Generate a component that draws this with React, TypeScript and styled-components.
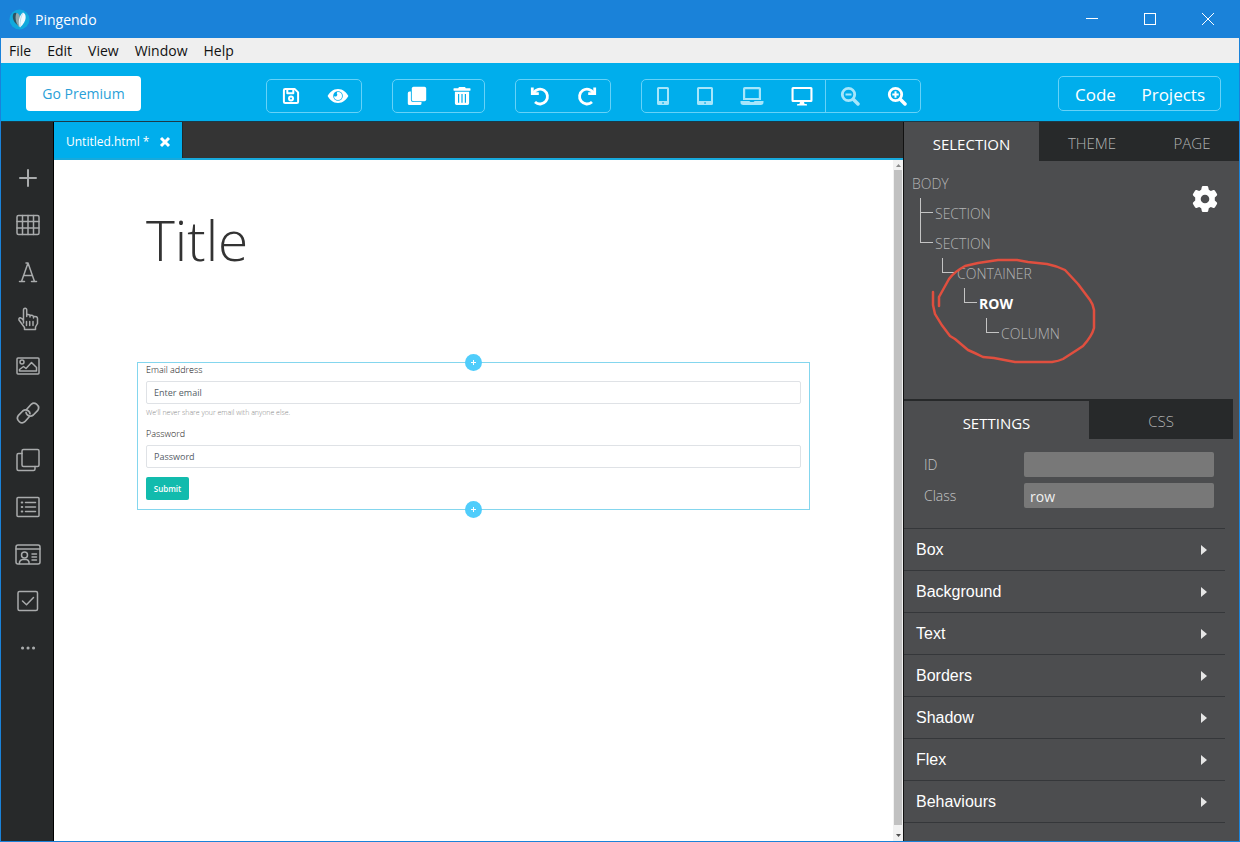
import React from "react";
import styled, { createGlobalStyle, css } from "styled-components";

const ui = `"Open Sans", "Noto Sans", sans-serif`;

const color = {
  frame: "#1a82d9",
  bar: "#00aeec",
  outline: "#66d2f8",
  dark: "#27292a",
  tabs: "#343434",
  panel: "#4c4d4f",
  muted: "#b3b4b5",
  guide: "#84d6ee",
};

const GlobalStyle = createGlobalStyle`
  *, *::before, *::after { box-sizing: border-box; }
  body { margin: 0; font-family: ${ui}; background: ${color.panel}; }
  button, input { font: inherit; }
  button { margin: 0; padding: 0; border: 0; background: none; color: inherit; cursor: pointer; }
  h1, ul { margin: 0; padding: 0; }
  ul { list-style: none; }
  svg { display: block; }
`;

const AppWindow = styled.div`
  display: flex;
  flex-direction: column;
  min-height: 100vh;
  border: 1px solid ${color.frame};
  border-top: 0;
`;

/* Title bar and menu */

const TitleBar = styled.header`
  display: flex;
  align-items: center;
  height: 38px;
  padding: 0 2px 0 8px;
  background: ${color.frame};
  color: #fff;
`;

const AppName = styled.span`
  margin-left: 5px;
  padding-top: 1px;
  font-size: 14px;
  line-height: 20px;
`;

const WindowButtons = styled.div`
  display: flex;
  margin-left: auto;
`;

const WindowButton = styled.button`
  display: grid;
  place-items: center;
  width: 58px;
  height: 38px;
`;

const MenuBar = styled.nav`
  display: flex;
  align-items: center;
  gap: 16px;
  height: 25px;
  padding-left: 8px;
  background: #efefef;
`;

const MenuItem = styled.button`
  color: #111;
  font-size: 14px;
  line-height: 20px;
`;

/* Toolbar */

const Toolbar = styled.div`
  display: flex;
  align-items: center;
  height: 58px;
  padding: 4px 18px 0 25px;
  background: ${color.bar};
  color: #fff;
`;

const PremiumButton = styled.button`
  width: 115px;
  height: 35px;
  margin-bottom: 2px;
  border-radius: 4px;
  background: #fff;
  color: #2a9fd8;
  font-size: 14px;
`;

const ToolGroups = styled.div`
  display: flex;
  gap: 30px;
  margin: 4px auto 0 125px;
`;

const ToolGroup = styled.div`
  display: flex;
  height: 34px;
  border: 1px solid ${color.outline};
  border-radius: 5px;
`;

const ToolButton = styled.button<{ $width?: number; $dim?: boolean; $divided?: boolean }>`
  display: grid;
  place-items: center;
  width: ${(p) => p.$width ?? 47}px;
  color: ${(p) => (p.$dim ? "#a6e6fb" : "#fff")};
  ${(p) => p.$divided && css`border-left: 1px solid ${color.outline};`}
`;

const ModeGroup = styled.div`
  display: flex;
  justify-content: space-between;
  width: 163px;
  height: 35px;
  margin-bottom: 2px;
  padding: 2px 15px 0 16px;
  border: 1px solid ${color.outline};
  border-radius: 5px;
  font-size: 17px;
`;

/* Body */

const Body = styled.div`
  display: flex;
  flex: 1;
  border-top: 1px solid #1c3a48;
`;

const Rail = styled.nav`
  display: flex;
  flex-direction: column;
  width: 53px;
  flex: none;
  padding: 32px 0 0 2px;
  border-right: 1px solid #000;
  background: ${color.dark};
  color: #a9abac;
`;

const RailButton = styled.button`
  display: grid;
  place-items: center;
  height: 47px;
`;

const Workspace = styled.main`
  display: flex;
  flex: 1;
  flex-direction: column;
  min-width: 0;
`;

const FileTabs = styled.div`
  display: flex;
  height: 38px;
  border-bottom: 2px solid #17a9dc;
  background: ${color.tabs};
`;

const FileTab = styled.div`
  display: flex;
  align-items: center;
  gap: 10px;
  width: 129px;
  padding: 3px 0 0 12px;
  border-right: 1px solid #20282c;
  background: ${color.bar};
  color: #fff;
  font-size: 12px;
`;

const CanvasArea = styled.div`
  display: flex;
  flex: 1;
  background: #fff;
`;

const Canvas = styled.div`
  flex: 1;
  min-width: 0;
  padding: 45px 83px 0;
`;

const ScrollTrack = styled.div`
  display: flex;
  flex-direction: column;
  align-items: center;
  justify-content: space-between;
  width: 10px;
  padding: 4px 0;
  background: #f1f1f1;
`;

const ScrollThumb = styled.div`
  flex: 1;
  width: 8px;
  margin: 3px 0 9px;
  background: #c1c1c1;
`;

const PageTitle = styled.h1`
  padding-left: 9px;
  color: #333;
  font-size: 55px;
  font-weight: 300;
  line-height: 70px;
`;

const SelectedRow = styled.form`
  position: relative;
  display: flex;
  flex-direction: column;
  align-items: flex-start;
  height: 148px;
  margin-top: 87px;
  padding: 0 8px;
  border: 1px solid ${color.guide};
  color: #111;
  font-size: 9px;
`;

const AddHandle = styled.button<{ $edge: "top" | "bottom" }>`
  position: absolute;
  left: 50%;
  ${(p) => p.$edge}: -9px;
  display: grid;
  place-items: center;
  width: 17px;
  height: 17px;
  margin-left: -9px;
  border-radius: 50%;
  background: #50cdfb;
  color: #fff;
`;

const FieldLabel = styled.label`
  font-weight: 300;
  line-height: 14px;
`;

const TextField = styled.input`
  width: 100%;
  height: 23px;
  margin-top: 4px;
  padding: 0 7px;
  border: 1px solid #dfe2e6;
  border-radius: 2px;
  outline: 0;
  background: #fff;
  &::placeholder {
    color: #555d66;
    opacity: 1;
  }
`;

const Hint = styled.small`
  margin: 2px 0 7px;
  color: #8a8a8a;
  font-size: 7px;
  font-weight: 300;
  line-height: 14px;
`;

const SubmitButton = styled.button`
  width: 43px;
  height: 23px;
  margin-top: 9px;
  border-radius: 2px;
  background: #12bbad;
  color: #fff;
  font-size: 8px;
  font-weight: 600;
`;

/* Inspector */

const Inspector = styled.aside`
  width: 336px;
  flex: none;
  border-left: 1px solid #111;
  background: ${color.panel};
  color: #fff;
`;

const PanelTabs = styled.div`
  display: flex;
  height: 39px;
  background: ${color.dark};
  font-size: 15px;
`;

const SubTabs = styled(PanelTabs)`
  height: 40px;
  margin-right: 6px;
  border-top: 2px solid ${color.dark};
`;

const PanelTab = styled.button<{ $grow: number; $active?: boolean }>`
  flex: ${(p) => p.$grow} 1 0;
  padding-top: ${(p) => (p.$active ? 5 : 2)}px;
  background: ${(p) => (p.$active ? color.panel : "transparent")};
  color: ${(p) => (p.$active ? "#fff" : color.muted)};
  font-weight: ${(p) => (p.$active ? 400 : 300)};
`;

const TreePanel = styled.section`
  position: relative;
  height: 238px;
  padding: 7px 8px;
`;

const TreeRow = styled.li<{ $depth: number }>`
  display: flex;
  height: 30px;
  padding-left: ${(p) => Math.max(0, p.$depth * 22 - 14)}px;
`;

const Branch = styled.span<{ $open?: boolean }>`
  width: 15px;
  height: ${(p) => (p.$open ? 30 : 15)}px;
  border-left: 1px solid #c4c4c4;
  &::after {
    content: "";
    display: block;
    width: 12px;
    height: 15px;
    border-bottom: 1px solid #c4c4c4;
  }
`;

const TreeNode = styled.button<{ $selected?: boolean }>`
  color: ${(p) => (p.$selected ? "#fff" : color.muted)};
  font-size: 14px;
  font-weight: ${(p) => (p.$selected ? 700 : 300)};
  line-height: 32px;
`;

const GearButton = styled.button`
  position: absolute;
  top: 24px;
  right: 20px;
`;

const Scribble = styled.svg`
  position: absolute;
  top: 94px;
  left: 24px;
  pointer-events: none;
`;

const Fields = styled.div`
  display: flex;
  flex-direction: column;
  gap: 6px;
  padding: 13px 25px 20px 20px;
`;

const FieldRow = styled.div`
  display: flex;
  align-items: center;
`;

const PropertyLabel = styled.label`
  width: 100px;
  color: #c4c5c6;
  font-size: 14px;
  font-weight: 300;
  line-height: 25px;
`;

const PropertyInput = styled.input`
  flex: 1;
  min-width: 0;
  height: 25px;
  padding: 2px 6px 0;
  border: 0;
  border-radius: 2px;
  outline: 0;
  background: #787878;
  color: #f0f0f0;
  font-size: 14px;
`;

const Accordion = styled.div`
  margin-right: 14px;
  border-bottom: 1px solid #35373a;
`;

const AccordionButton = styled.button`
  display: flex;
  align-items: center;
  justify-content: space-between;
  width: 100%;
  height: 42px;
  padding: 0 18px 0 12px;
  border-top: 1px solid #35373a;
  font-family: "Liberation Sans", Arial, sans-serif;
  font-size: 16px;
`;

/* Icons */

const Logo = () => (
  <svg width="21" height="21" viewBox="0 0 21 21" aria-hidden="true">
    <circle cx="10.5" cy="10.5" r="10" fill="#10a9dd" />
    <path d="M10 17C4.500 14 2.500 8 4.500 4.500 6.500 3 8.500 4 9.500 7z" fill="#2b5361" />
    <path d="M10 18C6 13 6 7 7.500 4 9.500 4 10.800 6 11.200 9z" fill="#8fa7ad" />
    <path d="M11 18.500C8.500 14 10 6.500 14 3.500 17.500 4.500 18.500 12 11 18.500z" fill="#eefaff" />
    <path d="M11 18C10.800 12 12 7 14 4" fill="none" stroke="#b4dcea" strokeWidth="1" />
  </svg>
);

const Fill = ({ size, box = 20, children }: { size: number; box?: number; children: React.ReactNode }) => (
  <svg width={size} height={size} viewBox={`0 0 ${box} ${box}`} fill="currentColor" fillRule="evenodd" aria-hidden="true">
    {children}
  </svg>
);

const Line = ({ size = 26, width = 1.5, children }: { size?: number; width?: number; children: React.ReactNode }) => (
  <svg
    width={size}
    height={size}
    viewBox={`0 0 ${size} ${size}`}
    fill="none"
    stroke="currentColor"
    strokeWidth={width}
    strokeLinecap="round"
    strokeLinejoin="round"
    aria-hidden="true"
  >
    {children}
  </svg>
);

const icons = {
  save: (
    <Line size={18} width={2}>
      <path d="M1.900 3.200Q1.900 1.900 3.200 1.900H12.600L16.100 5.400V14.800Q16.100 16.100 14.800 16.100H3.200Q1.900 16.100 1.900 14.800z" />
      <path d="M5.300 2.200V6.300H11.300V2.200" />
      <circle cx="9" cy="11.400" r="2" />
    </Line>
  ),
  eye: (
    <Fill size={22} box={22}>
      <path d="M11 4C6 4 2.500 7.500.6 11 2.500 14.500 6 18 11 18s8.500-3.500 10.400-7C19.500 7.500 16 4 11 4zm0 2.200a4.800 4.800 0 1 1 0 9.600 4.800 4.800 0 0 1 0-9.600z" />
      <path d="M11 7a4 4 0 1 1-4 4c.6.800 2 .8 2.700.1.700-.7.800-2 .1-2.700C9.700 7.700 10.200 7 11 7z" />
    </Fill>
  ),
  copy: (
    <Fill size={20}>
      <path d="M6.500.8h11Q19.200.8 19.200 2.500v11q0 1.700-1.700 1.700h-11q-1.700 0-1.700-1.700v-11Q4.800.8 6.500.8z" />
      <path d="M3.900 5.500v8.300q0 2.300 2.300 2.300h8.300v1.300q0 1.700-1.700 1.700H2.500Q.8 19.100.8 17.400V7.200Q.8 5.500 2.500 5.500z" />
    </Fill>
  ),
  trash: (
    <Fill size={20}>
      <path d="M7 1h6l.8 1.300H18q.5 0 .5.600v1.200q0 .6-.5.600H2q-.5 0-.5-.6V2.900q0-.6.500-.6h4.200z" />
      <path d="M2.900 5.700h14.200v11.600q0 1.700-1.700 1.700H4.600q-1.700 0-1.700-1.700zM6 8v8.800h1.200V8zm3.400 0v8.800h1.200V8zm3.400 0v8.800H14V8z" />
    </Fill>
  ),
  undo: (
    <Line size={20} width={2.800}>
      <path d="M3.600 7A7.400 7.400 0 1 1 5 16" strokeLinecap="butt" />
      <path d="M2.300 1.500V7.600H8.800" strokeLinejoin="miter" strokeLinecap="butt" />
      <path d="M2 4L6.500 8H2z" fill="currentColor" stroke="none" />
    </Line>
  ),
  redo: (
    <Line size={20} width={2.800}>
      <path d="M16.400 7A7.400 7.400 0 1 0 15 16" strokeLinecap="butt" />
      <path d="M17.700 1.500V7.600H11.200" strokeLinejoin="miter" strokeLinecap="butt" />
      <path d="M18 4L13.500 8H18z" fill="currentColor" stroke="none" />
    </Line>
  ),
  phone: (
    <Fill size={20}>
      <path d="M5.500 1h9Q16 1 16 2.500v15q0 1.500-1.500 1.500h-9Q4 19 4 17.500v-15Q4 1 5.500 1zm.5 2v12h8V3zm3.300 13.200v1.500h1.500v-1.500z" />
    </Fill>
  ),
  tablet: (
    <Fill size={20}>
      <path d="M3.500 1h13Q18 1 18 2.500v15q0 1.500-1.500 1.500h-13Q2 19 2 17.500v-15Q2 1 3.500 1zM4 3v12h12V3zm5.300 13.200v1.500h1.500v-1.500z" />
    </Fill>
  ),
  laptop: (
    <Fill size={24} box={24}>
      <path d="M4.800 3h14.400Q21 3 21 4.800V16H3V4.800Q3 3 4.800 3zM5.200 5.200v8.800h13.600V5.200z" />
      <path d="M.5 17h9q.3 1 1.300 1h2.400q1 0 1.300-1h9v1.300q0 2.700-2.700 2.700H3.200Q.5 21 .5 18.300z" />
    </Fill>
  ),
  desktop: (
    <Fill size={22} box={22}>
      <path d="M2 2h18q1.500 0 1.500 1.500v12Q21.500 17 20 17H2Q.5 17 .5 15.500v-12Q.5 2 2 2zm.6 2v11h16.800V4z" />
      <path d="M9 17h4l.6 2h1.600q.8 0 .8.800v.7H6v-.7q0-.8.800-.8h1.600z" />
    </Fill>
  ),
  zoomOut: (
    <Line size={20} width={2.800}>
      <circle cx="8.500" cy="8.500" r="6.200" />
      <path d="M13.500 13.500L18 18" strokeWidth="3.500" />
      <path d="M5.500 8.500H11.500" strokeWidth="2" strokeLinecap="butt" />
    </Line>
  ),
  zoomIn: (
    <Line size={20} width={2.800}>
      <circle cx="8.500" cy="8.500" r="6.200" />
      <path d="M13.500 13.500L18 18" strokeWidth="3.500" />
      <path d="M5.300 8.500H11.700M8.500 5.300V11.700" strokeWidth="2" strokeLinecap="butt" />
    </Line>
  ),
  close: (
    <Line size={12} width={3}>
      <path d="M2 2L10 10M10 2L2 10" strokeLinecap="butt" />
    </Line>
  ),
  gear: (
    <Fill size={28} box={28}>
      <path d="M12 1h4Q17 1 17.200 2L17.800 4.700 19.800 5.900 22.400 5.100Q23.400 4.700 24 5.700L26 9.100Q26.500 10 25.700 10.700L23.800 12.500V15.500L25.700 17.300Q26.500 18 26 18.900L24 22.300Q23.400 23.300 22.400 22.900L19.800 22.100 17.800 23.300 17.200 26Q17 27 16 27H12Q11 27 10.800 26L10.200 23.300 8.200 22.100 5.600 22.900Q4.600 23.300 4 22.300L2 18.900Q1.500 18 2.300 17.300L4.200 15.500V12.500L2.300 10.700Q1.500 10 2 9.100L4 5.700Q4.600 4.700 5.600 5.100L8.200 5.900 10.200 4.700 10.800 2Q11 1 12 1zM14 9.700a4.300 4.300 0 1 0 0 8.600 4.300 4.300 0 0 0 0-8.600z" />
    </Fill>
  ),
};

const railIcons: [string, React.ReactNode][] = [
  ["Add", <Line width={2}><path d="M13 5V21M5 13H21" /></Line>],
  ["Table", (
    <Line>
      <rect x="2" y="3.500" width="22" height="19" rx="1.500" />
      <path d="M7.500 3.500V22.500M13 3.500V22.500M18.500 3.500V22.500M2 9.500H24M2 16H24" />
    </Line>
  )],
  ["Text", (
    <Line>
      <path d="M6.500 22.500L13 4L19.500 22.500M8.500 16.500H17.500M4.500 22.500H9.500M16.500 22.500H21.500M11 4H13" />
    </Line>
  )],
  ["Button", (
    <Line>
      <path d="M8.500 17V4Q8.500 2.300 10.100 2.300T11.700 4V10.500M11.700 10.500V8.700Q13.500 8 15 9.200V11M15 9.500Q17 8.800 18.500 10.200V12M18.500 10.500Q22.500 10 22.500 12.500V17.500L20.500 21V23.500H9.500V21.500L4 14Q3.500 12 5.300 11.800 7 12 8.500 14.500" />
      <path d="M11.500 15.500V19.500M14.700 15.500V19.500M18 15.500V19.500" />
    </Line>
  )],
  ["Image", (
    <Line>
      <rect x="2" y="5" width="22" height="16" rx="1" />
      <circle cx="7" cy="9" r="2" />
      <path d="M4.500 18V16.500L8.500 13.500L11 15.500L16.500 9.500L21.500 14.500V18z" />
    </Line>
  )],
  ["Link", (
    <Line width={1.700}>
      <path d="M11.500 9.500L16.200 4.300Q18.800 2 21.500 4.200 25 7 22.800 10.300L18.300 15Q15.500 17.300 12.500 15 11 13.800 11 12.300" />
      <path d="M14.500 16.500L9.800 21.700Q7.200 24 4.500 21.800 1 19 3.200 15.700L7.700 11Q10.500 8.700 13.500 11 15 12.200 15 13.700" />
    </Line>
  )],
  ["Section", (
    <Line>
      <rect x="7" y="2.500" width="17" height="17" rx="1.500" />
      <path d="M7 6.500H3.500Q2 6.500 2 8V22Q2 23.500 3.500 23.500H18.500Q20 23.500 20 22V19.500" />
    </Line>
  )],
  ["List", (
    <Line>
      <rect x="2" y="3.500" width="22" height="19" rx="1" />
      <path d="M10.500 8.500H20.500M10.500 13H20.500M10.500 17.500H20.500" />
      <path d="M6.800 8.500H7.200M6.800 13H7.200M6.800 17.500H7.200" strokeWidth="2.200" />
    </Line>
  )],
  ["Card", (
    <Line>
      <rect x="1" y="4" width="24" height="19" rx="2" />
      <path d="M1 8H25M17 13H21.500M17 16H21.500M17 19H21.500" />
      <circle cx="9.500" cy="14" r="3" />
      <path d="M4.500 22.500V21Q5 19 7.500 18.500H11.500Q13.500 19 14 21V22.500" />
    </Line>
  )],
  ["Checkbox", (
    <Line>
      <rect x="3" y="3.500" width="19.500" height="19" rx="1.500" />
      <path d="M7.500 13L11.500 16.800L18.500 9.500" />
    </Line>
  )],
  ["More", <Line width={3}><path d="M7.500 13H7.600M13 13H13.100M18.500 13H18.600" /></Line>],
];

const tree: { label: string; depth: number; open?: boolean; selected?: boolean }[] = [
  { label: "BODY", depth: 0 },
  { label: "SECTION", depth: 1, open: true },
  { label: "SECTION", depth: 1 },
  { label: "CONTAINER", depth: 2 },
  { label: "ROW", depth: 3, selected: true },
  { label: "COLUMN", depth: 4 },
];

const PlusMark = () => (
  <svg width="5" height="5" viewBox="0 0 5 5" stroke="currentColor" strokeWidth="1" aria-hidden="true">
    <path d="M2.500 0V5M0 2.500H5" />
  </svg>
);

const ScrollArrow = ({ down }: { down?: boolean }) => (
  <svg width="5" height="3" viewBox="0 0 5 3" fill={down ? "#505050" : "#8b8b8b"} aria-hidden="true">
    <path d={down ? "M0 0H5L2.500 3z" : "M0 3H5L2.500 0z"} />
  </svg>
);

export default function App() {
  return (
    <AppWindow>
      <GlobalStyle />
      <TitleBar>
        <Logo />
        <AppName>Pingendo</AppName>
        <WindowButtons>
          <WindowButton aria-label="Minimize">
            <svg width="12" height="12" stroke="#fff"><path d="M0 5.500H12" /></svg>
          </WindowButton>
          <WindowButton aria-label="Maximize">
            <svg width="12" height="12" stroke="#fff" fill="none"><rect x=".5" y=".5" width="11" height="11" /></svg>
          </WindowButton>
          <WindowButton aria-label="Close">
            <svg width="12" height="12" stroke="#fff"><path d="M0 0L12 12M12 0L0 12" /></svg>
          </WindowButton>
        </WindowButtons>
      </TitleBar>
      <MenuBar>
        {["File", "Edit", "View", "Window", "Help"].map((item) => (
          <MenuItem key={item}>{item}</MenuItem>
        ))}
      </MenuBar>
      <Toolbar>
        <PremiumButton>Go Premium</PremiumButton>
        <ToolGroups>
          <ToolGroup>
            <ToolButton aria-label="Save">{icons.save}</ToolButton>
            <ToolButton aria-label="Preview">{icons.eye}</ToolButton>
          </ToolGroup>
          <ToolGroup>
            <ToolButton $width={47} aria-label="Duplicate">{icons.copy}</ToolButton>
            <ToolButton $width={44} aria-label="Delete">{icons.trash}</ToolButton>
          </ToolGroup>
          <ToolGroup>
            <ToolButton aria-label="Undo">{icons.undo}</ToolButton>
            <ToolButton aria-label="Redo">{icons.redo}</ToolButton>
          </ToolGroup>
          <ToolGroup>
            <ToolButton $width={42} $dim aria-label="Phone">{icons.phone}</ToolButton>
            <ToolButton $width={42} $dim aria-label="Tablet">{icons.tablet}</ToolButton>
            <ToolButton $width={52} $dim aria-label="Laptop">{icons.laptop}</ToolButton>
            <ToolButton aria-label="Desktop">{icons.desktop}</ToolButton>
            <ToolButton $width={48} $dim $divided aria-label="Zoom out">{icons.zoomOut}</ToolButton>
            <ToolButton aria-label="Zoom in">{icons.zoomIn}</ToolButton>
          </ToolGroup>
        </ToolGroups>
        <ModeGroup>
          <button>Code</button>
          <button>Projects</button>
        </ModeGroup>
      </Toolbar>
      <Body>
        <Rail>
          {railIcons.map(([name, icon]) => (
            <RailButton key={name} aria-label={name}>{icon}</RailButton>
          ))}
        </Rail>
        <Workspace>
          <FileTabs>
            <FileTab>
              <span>Untitled.html *</span>
              <button aria-label="Close file">{icons.close}</button>
            </FileTab>
          </FileTabs>
          <CanvasArea>
            <Canvas>
              <PageTitle>Title</PageTitle>
              <SelectedRow onSubmit={(e) => e.preventDefault()}>
                <AddHandle type="button" $edge="top" aria-label="Add before"><PlusMark /></AddHandle>
                <FieldLabel htmlFor="email">Email address</FieldLabel>
                <TextField id="email" type="email" placeholder="Enter email" />
                <Hint>We'll never share your email with anyone else.</Hint>
                <FieldLabel htmlFor="password">Password</FieldLabel>
                <TextField id="password" type="password" placeholder="Password" />
                <SubmitButton>Submit</SubmitButton>
                <AddHandle type="button" $edge="bottom" aria-label="Add after"><PlusMark /></AddHandle>
              </SelectedRow>
            </Canvas>
            <ScrollTrack>
              <ScrollArrow />
              <ScrollThumb />
              <ScrollArrow down />
            </ScrollTrack>
          </CanvasArea>
        </Workspace>
        <Inspector>
          <PanelTabs>
            <PanelTab $grow={135} $active>SELECTION</PanelTab>
            <PanelTab $grow={106}>THEME</PanelTab>
            <PanelTab $grow={94}>PAGE</PanelTab>
          </PanelTabs>
          <TreePanel>
            <ul>
              {tree.map(({ label, depth, open, selected }, i) => (
                <TreeRow key={i} $depth={depth}>
                  {depth > 0 && <Branch $open={open} />}
                  <TreeNode $selected={selected}>{label}</TreeNode>
                </TreeRow>
              ))}
            </ul>
            <GearButton aria-label="Selection settings">{icons.gear}</GearButton>
            <Scribble width="170" height="112" viewBox="0 0 170 112" fill="none" stroke="#e04f3f" strokeWidth="2.500" strokeLinecap="round" strokeLinejoin="round" aria-hidden="true">
              <path d="M5 37L5 50L7 59Q13 70 22 81L27 84 40 95Q47 98 55 102L66 103 87 107H124Q131 106 135 104L149 95 155 91Q164 81 166 73V55Q165 49 162 45L150 29 137 15Q129 11 119 9L100 7 89 5H70L50 8 37 11Q26 17 21 24 16 33 11 42V51" />
            </Scribble>
          </TreePanel>
          <SubTabs>
            <PanelTab $grow={185} $active>SETTINGS</PanelTab>
            <PanelTab $grow={144}>CSS</PanelTab>
          </SubTabs>
          <Fields>
            <FieldRow>
              <PropertyLabel htmlFor="node-id">ID</PropertyLabel>
              <PropertyInput id="node-id" />
            </FieldRow>
            <FieldRow>
              <PropertyLabel htmlFor="node-class">Class</PropertyLabel>
              <PropertyInput id="node-class" defaultValue="row" />
            </FieldRow>
          </Fields>
          <Accordion>
            {["Box", "Background", "Text", "Borders", "Shadow", "Flex", "Behaviours"].map((name) => (
              <AccordionButton key={name}>
                {name}
                <svg width="6" height="10" viewBox="0 0 6 10" fill="#e6e6e6" aria-hidden="true"><path d="M0 0L6 5L0 10z" /></svg>
              </AccordionButton>
            ))}
          </Accordion>
        </Inspector>
      </Body>
    </AppWindow>
  );
}
